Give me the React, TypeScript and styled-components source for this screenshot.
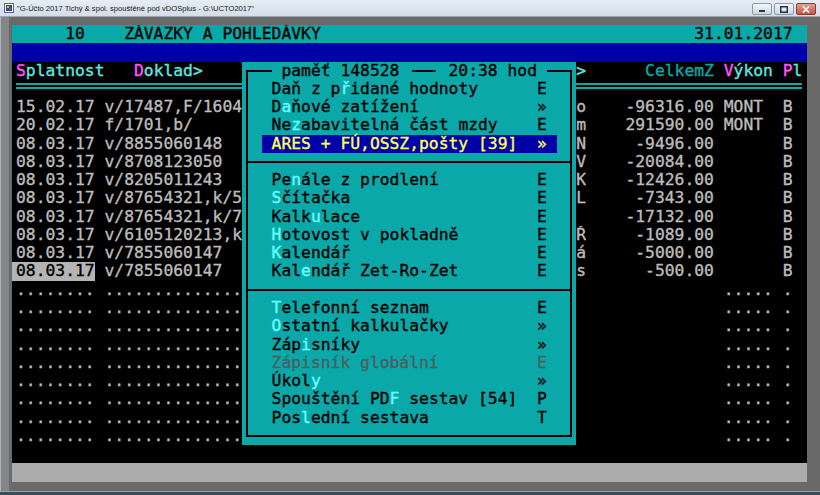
import React from "react";
import styled, { createGlobalStyle } from "styled-components";

const ROW = 18.28;

const TEAL = "#0aa8a8";
const BLUE = "#0000a8";
const GRAY = "#bcbcbc";
const CYAN = "#5fe6e0";
const MAGENTA = "#ff55ff";
const HOT = "#66ffff";

const GlobalStyle = createGlobalStyle`
  html, body {
    margin: 0;
    padding: 0;
    background: #3a3a3a;
  }
`;

const Window = styled.div`
  width: 820px;
  height: 495px;
  display: flex;
  flex-direction: column;
  background: #7c7c7c;
  box-shadow: inset 0 0 0 1px #5b6878;
  overflow: hidden;
`;

const TitleBar = styled.div`
  height: 17px;
  flex: none;
  display: flex;
  align-items: center;
  padding: 0 4px 0 4px;
  background: linear-gradient(#e6edf5, #d3dde8);
  border-bottom: 1px solid #9aa6b2;
  box-sizing: border-box;
`;

const AppIcon = styled.svg`
  width: 10px;
  height: 10px;
  flex: none;
  margin-right: 3px;
`;

const Caption = styled.span`
  flex: 1;
  font-family: "Liberation Sans", Arial, sans-serif;
  font-size: 7.6px;
  color: #1b1b1b;
  white-space: nowrap;
`;

const Controls = styled.div`
  display: flex;
  gap: 2px;
  align-self: flex-start;
  margin-top: 3px;
`;

const CtrlButton = styled.div<{ $close?: boolean }>`
  width: 20px;
  height: 12px;
  border-radius: 2px;
  box-sizing: border-box;
  border: 1px solid ${(p) => (p.$close ? "#8d3a2f" : "#8c99a8")};
  background: ${(p) =>
    p.$close
      ? "linear-gradient(#e4a096, #c7543f)"
      : "linear-gradient(#f4f7fa, #ccd6e2)"};
  display: flex;
  align-items: center;
  justify-content: center;
`;

const Body = styled.div`
  flex: 1;
  padding: 8px 13px 12px 12px;
  background: linear-gradient(90deg, #a9b6c2 0, #a9b6c2 1px, #858585 1px, #858585 9px, #6a6a6a 9px);
  box-shadow: inset 0 -3px 0 #3f4a52, inset 0 -4px 0 #86a9b8;
`;

const Screen = styled.div`
  position: relative;
  width: 795px;
  height: 457px;
  background: #000;
  font-family: "DejaVu Sans Mono", "Liberation Mono", monospace;
  font-size: 16.34px;
  line-height: ${ROW}px;
  white-space: pre;
  display: flex;
  flex-direction: column;
  overflow: hidden;
  color: ${GRAY};
  -webkit-text-stroke: 0.35px currentColor;
`;

const Line = styled.div<{ $bg?: string; $fg?: string }>`
  height: ${ROW}px;
  flex: none;
  display: flex;
  padding-left: 4px;
  background: ${(p) => p.$bg ?? "transparent"};
  color: ${(p) => p.$fg ?? "inherit"};
`;

const Cell = styled.span<{ $w: number; $right?: boolean; $fg?: string; $mark?: boolean }>`
  flex: none;
  width: ${(p) => p.$w}ch;
  overflow: hidden;
  text-align: ${(p) => (p.$right ? "right" : "left")};
  color: ${(p) => p.$fg ?? "inherit"};
  ${(p) =>
    p.$mark &&
    `
    background: #b4b4b4;
    color: #000;
    margin-left: -4px;
    padding-left: 4px;
  `}
`;

const Hi = styled.span<{ $fg: string }>`
  color: ${(p) => p.$fg};
`;

const DoubleRule = styled.div`
  width: 80ch;
  height: 2px;
  margin-top: 3px;
  border-top: 2px solid ${TEAL};
  border-bottom: 2px solid ${TEAL};
`;

/* menu popup over the list */
const Menu = styled.div`
  position: absolute;
  left: calc(4px + 23ch);
  top: ${ROW * 2}px;
  width: 34ch;
  height: ${ROW * 21}px;
  background: ${TEAL};
  color: #000;
  padding: ${ROW}px 0 0 2ch;
  box-sizing: border-box;
`;

const MenuFrame = styled.div`
  position: absolute;
  left: calc(0.5ch - 1px);
  right: calc(0.5ch - 1px);
  top: ${ROW / 2 - 1}px;
  bottom: ${ROW / 2 - 1}px;
  border: 2px solid #000;
  pointer-events: none;
`;

const MenuTitle = styled.div`
  position: absolute;
  left: 3ch;
  top: 0;
  height: ${ROW}px;
  background: ${TEAL};
  display: flex;
`;

const Dash = styled.span`
  display: inline-block;
  width: 3ch;
  background: linear-gradient(#000, #000) center / 2.4ch 2px no-repeat;
`;

const MenuRow = styled.div<{ $active?: boolean; $off?: boolean }>`
  position: relative;
  width: 30ch;
  height: ${ROW}px;
  padding: 0 1ch;
  box-sizing: border-box;
  display: flex;
  justify-content: space-between;
  background: ${(p) => (p.$active ? BLUE : "transparent")};
  color: ${(p) => (p.$active ? "#ffff55" : p.$off ? "#4d5e5e" : "#000")};
`;

const Separator = styled.div`
  height: ${ROW}px;
  margin-left: calc(-1.5ch - 1px);
  width: calc(33ch + 2px);
  background: linear-gradient(#000, #000) center / 100% 2px no-repeat;
`;

type Entry = {
  date: string;
  doc: string;
  tail: string;
  amount: string;
  vykon: string;
};

const entries: Entry[] = [
  { date: "15.02.17", doc: "v/17487,F/1604", tail: "o", amount: "-96316.00", vykon: "MONT" },
  { date: "20.02.17", doc: "f/1701,b/", tail: "m", amount: "291590.00", vykon: "MONT" },
  { date: "08.03.17", doc: "v/8855060148", tail: "N", amount: "-9496.00", vykon: "" },
  { date: "08.03.17", doc: "v/8708123050", tail: "V", amount: "-20084.00", vykon: "" },
  { date: "08.03.17", doc: "v/8205011243", tail: "K", amount: "-12426.00", vykon: "" },
  { date: "08.03.17", doc: "v/87654321,k/5", tail: "L", amount: "-7343.00", vykon: "" },
  { date: "08.03.17", doc: "v/87654321,k/7", tail: " ", amount: "-17132.00", vykon: "" },
  { date: "08.03.17", doc: "v/6105120213,k", tail: "Ř", amount: "-1089.00", vykon: "" },
  { date: "08.03.17", doc: "v/7855060147", tail: "á", amount: "-5000.00", vykon: "" },
  { date: "08.03.17", doc: "v/7855060147", tail: "s", amount: "-500.00", vykon: "" },
];

type Item =
  | { sep: true }
  | { label: string; hot?: number; key: string; active?: boolean; off?: boolean };

const items: Item[] = [
  { label: "Daň z přidané hodnoty", hot: 7, key: "E" },
  { label: "Daňové zatížení", hot: 1, key: "»" },
  { label: "Nezabavitelná část mzdy", hot: 2, key: "E" },
  { label: "ARES + FÚ,OSSZ,pošty [39]", key: "»", active: true },
  { sep: true },
  { label: "Penále z prodlení", hot: 2, key: "E" },
  { label: "Sčítačka", hot: 0, key: "E" },
  { label: "Kalkulace", hot: 4, key: "E" },
  { label: "Hotovost v pokladně", hot: 0, key: "E" },
  { label: "Kalendář", hot: 0, key: "E" },
  { label: "Kalendář Zet-Ro-Zet", hot: 3, key: "E" },
  { sep: true },
  { label: "Telefonní seznam", hot: 0, key: "E" },
  { label: "Ostatní kalkulačky", hot: 0, key: "»" },
  { label: "Zápisníky", hot: 3, key: "»" },
  { label: "Zápisník globální", key: "E", off: true },
  { label: "Úkoly", hot: 4, key: "»" },
  { label: "Spouštění PDF sestav [54]", hot: 12, key: "P" },
  { label: "Poslední sestava", hot: 3, key: "T" },
];

function Label({ text, hot }: { text: string; hot?: number }) {
  if (hot === undefined) return <span>{text}</span>;
  return (
    <span>
      {text.slice(0, hot)}
      <Hi $fg={HOT}>{text[hot]}</Hi>
      {text.slice(hot + 1)}
    </span>
  );
}

function ToolMenu() {
  return (
    <Menu>
      <MenuFrame />
      <MenuTitle>
        <span> paměť 148528 </span>
        <Dash />
        <span> 20:38 hod </span>
      </MenuTitle>
      {items.map((it, i) =>
        "sep" in it ? (
          <Separator key={i} />
        ) : (
          <MenuRow key={i} $active={it.active} $off={it.off}>
            <Label text={it.label} hot={it.hot} />
            <span>{it.key}</span>
          </MenuRow>
        )
      )}
    </Menu>
  );
}

function DataLine({ e, mark }: { e: Entry; mark?: boolean }) {
  return (
    <Line>
      <Cell $w={8} $mark={mark}>{e.date}</Cell>
      <Cell $w={1}> </Cell>
      <Cell $w={14}>{e.doc}</Cell>
      <Cell $w={34}> </Cell>
      <Cell $w={1}>{e.tail}</Cell>
      <Cell $w={13} $right>{e.amount}</Cell>
      <Cell $w={1}> </Cell>
      <Cell $w={5}>{e.vykon}</Cell>
      <Cell $w={1}> </Cell>
      <Cell $w={1}>B</Cell>
    </Line>
  );
}

function DotLine() {
  return (
    <Line>
      <Cell $w={8}>........</Cell>
      <Cell $w={1}> </Cell>
      <Cell $w={14}>..............</Cell>
      <Cell $w={34}> </Cell>
      <Cell $w={1}> </Cell>
      <Cell $w={13}> </Cell>
      <Cell $w={1}> </Cell>
      <Cell $w={5}>.....</Cell>
      <Cell $w={1}> </Cell>
      <Cell $w={1}>.</Cell>
    </Line>
  );
}

export default function App() {
  return (
    <>
      <GlobalStyle />
      <Window>
        <TitleBar>
          <AppIcon viewBox="0 0 10 10">
            <rect x="0.5" y="0.5" width="9" height="9" fill="#f4f6f8" stroke="#5a6b84" />
            <rect x="2" y="2" width="6" height="6" fill="#2a4d9a" />
            <rect x="3" y="3" width="2" height="2" fill="#e8c040" />
            <rect x="5" y="5" width="2" height="2" fill="#d23a2a" />
          </AppIcon>
          <Caption>"G-Účto 2017 Tichý &amp; spol. spouštěné pod vDOSplus - G:\UCTO2017"</Caption>
          <Controls>
            <CtrlButton>
              <svg width="8" height="6" viewBox="0 0 8 6">
                <rect x="1" y="4" width="6" height="2" fill="#2b3440" />
              </svg>
            </CtrlButton>
            <CtrlButton>
              <svg width="8" height="7" viewBox="0 0 8 7">
                <rect x="0.75" y="0.75" width="6.5" height="5.5" fill="none" stroke="#2b3440" strokeWidth="1.5" />
              </svg>
            </CtrlButton>
            <CtrlButton $close>
              <svg width="8" height="7" viewBox="0 0 8 7">
                <path d="M1 0.5 L7 6.5 M7 0.5 L1 6.5" stroke="#fff" strokeWidth="1.6" />
              </svg>
            </CtrlButton>
          </Controls>
        </TitleBar>
        <Body>
          <Screen>
            <Line $bg={TEAL} $fg="#000">
              <Cell $w={11}>{"     10"}</Cell>
              <Cell $w={58}>ZÁVAZKY A POHLEDÁVKY</Cell>
              <Cell $w={10}>31.01.2017</Cell>
            </Line>
            <Line $bg={BLUE} />
            <Line $fg={CYAN}>
              <Cell $w={12}>
                <Hi $fg={MAGENTA}>S</Hi>platnost
              </Cell>
              <Cell $w={45}>
                <Hi $fg={MAGENTA}>D</Hi>oklad&gt;
              </Cell>
              <Cell $w={1}>&gt;</Cell>
              <Cell $w={13} $right $fg={TEAL}>CelkemZ</Cell>
              <Cell $w={1}> </Cell>
              <Cell $w={6}>
                <Hi $fg={MAGENTA}>V</Hi>ýkon
              </Cell>
              <Cell $w={2}>
                <Hi $fg={MAGENTA}>P</Hi>l
              </Cell>
            </Line>
            <Line>
              <DoubleRule />
            </Line>
            {entries.map((e, i) => (
              <DataLine key={i} e={e} mark={i === entries.length - 1} />
            ))}
            {Array.from({ length: 9 }).map((_, i) => (
              <DotLine key={i} />
            ))}
            <Line />
            <Line $bg="#acacac" />
            <ToolMenu />
          </Screen>
        </Body>
      </Window>
    </>
  );
}
